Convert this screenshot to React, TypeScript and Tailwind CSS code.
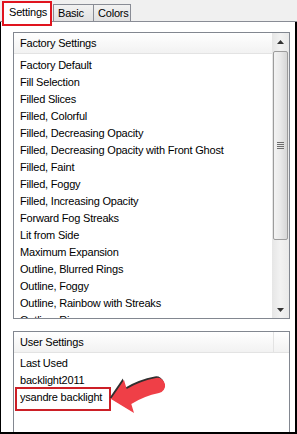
import React from "react";

const factory = [
  "Factory Default",
  "Fill Selection",
  "Filled Slices",
  "Filled, Colorful",
  "Filled, Decreasing Opacity",
  "Filled, Decreasing Opacity with Front Ghost",
  "Filled, Faint",
  "Filled, Foggy",
  "Filled, Increasing Opacity",
  "Forward Fog Streaks",
  "Lit from Side",
  "Maximum Expansion",
  "Outline, Blurred Rings",
  "Outline, Foggy",
  "Outline, Rainbow with Streaks",
  "Outline, Rings",
];

const user = ["Last Used", "backlight2011", "ysandre backlight"];

function Row({ label }: { label: string }) {
  return (
    <div className="h-[17px] leading-[17px] pl-[6px] whitespace-nowrap">{label}</div>
  );
}

function Header({ label, divider }: { label: string; divider?: boolean }) {
  return (
    <div className="h-[21px] shrink-0 flex items-stretch border-b border-[#e3e3e3] bg-gradient-to-b from-[#ffffff] to-[#f2f2f2]">
      <div className="flex-1 pl-[6px] leading-[20px] whitespace-nowrap">{label}</div>
      {divider && <div className="w-[16px] border-l border-[#e3e3e3]" />}
    </div>
  );
}

function Scrollbar() {
  return (
    <div className="w-[17px] shrink-0 flex flex-col bg-gradient-to-r from-[#e6e6e6] via-[#f2f2f2] to-[#e9e9e9]">
      <div className="h-[17px] flex items-center justify-center">
        <svg width="7" height="4" viewBox="0 0 7 4">
          <path d="M0 4 L3.5 0 L7 4 Z" fill="#333" />
        </svg>
      </div>
      <div className="mt-[1px] h-[189px] mx-[1px] rounded-[2px] border border-[#9c9c9c] bg-gradient-to-r from-[#f3f3f3] via-[#e9e9e9] to-[#d6d6d6] flex items-center justify-center">
        <div className="flex flex-col gap-[1px]">
          <div className="w-[7px] h-[1px] bg-[#6d6d6d]" />
          <div className="w-[7px] h-[1px] bg-[#6d6d6d]" />
          <div className="w-[7px] h-[1px] bg-[#6d6d6d]" />
          <div className="w-[7px] h-[1px] bg-[#6d6d6d]" />
        </div>
      </div>
      <div className="flex-1" />
      <div className="h-[17px] flex items-center justify-center">
        <svg width="7" height="4" viewBox="0 0 7 4">
          <path d="M0 0 L3.5 4 L7 0 Z" fill="#333" />
        </svg>
      </div>
    </div>
  );
}

export default function App() {
  return (
    <div className="relative w-[297px] h-[434px] overflow-hidden bg-white text-black text-[11px] tracking-[-0.2px] font-['Liberation_Sans',Arial,sans-serif]">
      {/* tab strip */}
      <div className="h-[22px] bg-[#f0f0f0] border-b border-[#898c95] flex items-end pl-[3px]">
        <div className="relative z-10 w-[48px] h-[20px] -mb-[1px] bg-white border-l border-t border-r border-[#898c95] pl-[5px] leading-[18px]">
          Settings
        </div>
        <div className="ml-[2px] w-[41px] h-[17px] border border-b-0 border-[#898c95] bg-gradient-to-b from-[#f2f2f2] to-[#e1e1e1] pl-[4px] leading-[16px]">
          Basic
        </div>
        <div className="w-[37px] h-[17px] border-r border-t border-[#898c95] bg-gradient-to-b from-[#f2f2f2] to-[#e1e1e1] pl-[4px] leading-[16px]">
          Colors
        </div>
      </div>

      {/* content */}
      <div className="h-[412px] flex flex-col border-l border-r-2 border-b-2 border-black pl-[12px] pr-[5px] pt-[10px]">
        <div className="h-[287px] shrink-0 border border-[#828790] flex overflow-hidden">
          <div className="flex-1 flex flex-col overflow-hidden">
            <Header label="Factory Settings" />
            <div className="pt-[3px] overflow-hidden">
              {factory.map((f) => (
                <Row key={f} label={f} />
              ))}
            </div>
          </div>
          <Scrollbar />
        </div>

        <div className="mt-[12px] flex-1 border-t border-l border-r border-[#828790] flex flex-col overflow-hidden">
          <Header label="User Settings" divider />
          <div className="pt-[2px]">
            {user.map((u) => (
              <Row key={u} label={u} />
            ))}
          </div>
        </div>
      </div>

      {/* red highlight boxes */}
      <div className="absolute left-[2px] top-[1px] w-[50px] h-[25px] border-2 border-[#e0141e] pointer-events-none z-20" />
      <div className="absolute left-[15px] top-[387px] w-[96px] h-[24px] border-2 border-[#cc1f26] pointer-events-none" />

      {/* arrow */}
      <svg
        className="absolute left-[100px] top-[368px]"
        width="70"
        height="50"
        viewBox="0 0 70 50"
      >
        <path
          d="M11 31 L24 12 L26.7 21 Q40 13 56 10 A7.6 7.6 0 0 1 59 25 Q44 28 31.3 36 L34 45 Z"
          fill="#2f2f2f"
          transform="translate(-1.2,-1.5)"
        />
        <path
          d="M11 31 L24 12 L26.7 21 Q40 13 56 10 A7.6 7.6 0 0 1 59 25 Q44 28 31.3 36 L34 45 Z"
          fill="#ef3f47"
        />
      </svg>
    </div>
  );
}
